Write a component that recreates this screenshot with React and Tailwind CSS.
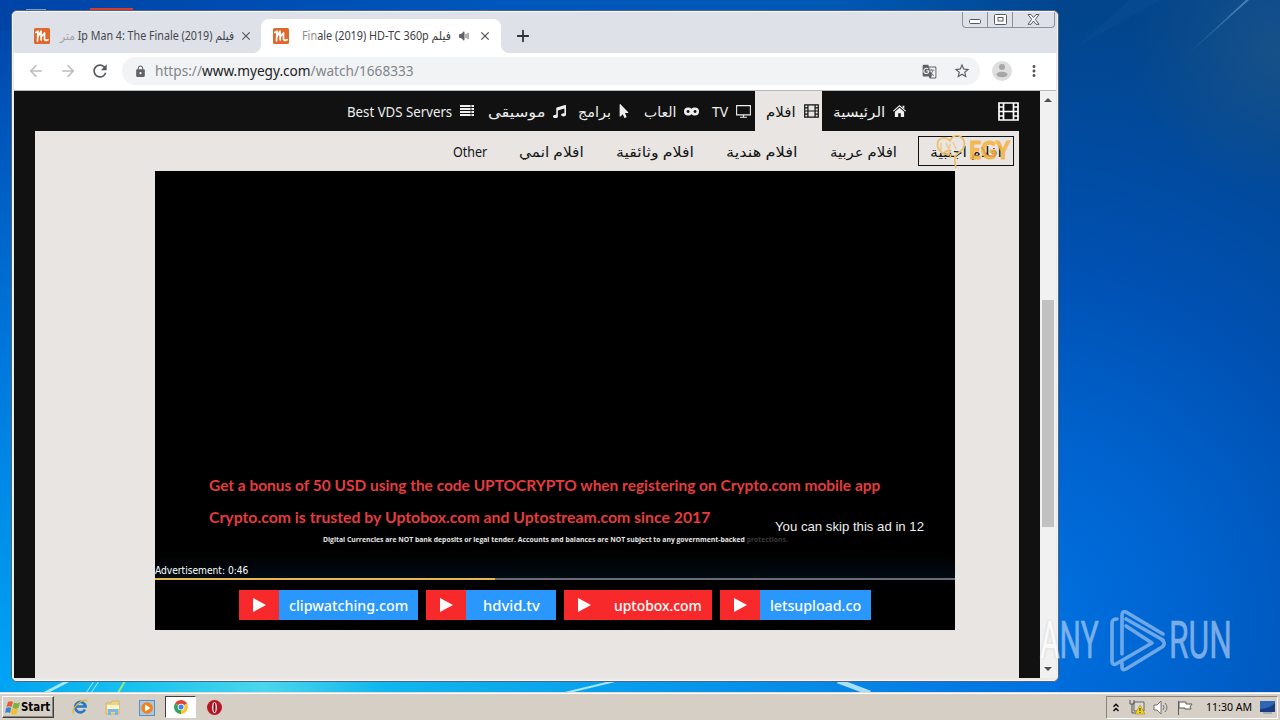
import React, { useLayoutEffect, useRef } from "react";
import { ArrowLeft, ArrowRight, Plus } from "lucide-react";
import { MdLock, MdStarBorder, MdRefresh, MdGTranslate, MdClose, MdMoreVert } from "react-icons/md";
import { FaMusic, FaMousePointer } from "react-icons/fa";

/* A text label that condenses or widens its glyphs to fill its box. */
function Fit({ className = "", dir, children }) {
  const box = useRef(null);
  const text = useRef(null);
  useLayoutEffect(() => {
    const fit = () => {
      text.current.style.transform = "none";
      const k = box.current.clientWidth / text.current.offsetWidth;
      text.current.style.transform = `scaleX(${k})`;
    };
    fit();
    if (document.fonts) document.fonts.ready.then(fit);
  }, []);
  return (
    <span dir="ltr" ref={box} className={"flex shrink-0 whitespace-nowrap " + className}>
      <span ref={text} dir={dir} className="inline-block shrink-0 origin-left">
        {children}
      </span>
    </span>
  );
}

function Favicon() {
  return (
    <svg className="h-4 w-4 shrink-0" viewBox="0 0 16 16">
      <rect width="16" height="16" rx="1.5" fill="#e0682a" />
      <path d="M1.800 4.500 4 3.200 3.500 13M4.200 8 7 3.200 7.200 12M7.500 8.500 10.500 5v6.500l1.500 1 2-.8" fill="none" stroke="#fff" strokeWidth="1.700" strokeLinecap="round" strokeLinejoin="round" />
    </svg>
  );
}

function Film({ className }) {
  return (
    <svg className={className} viewBox="0 0 21 19" fill="none" stroke="currentColor" strokeWidth="1.700">
      <path d="M1 1h19v17H1zM5.500 1v17M15.500 1v17M5.500 9.500h10M1 5h4.500M1 9.500h4.500M1 14h4.500M15.500 5H20M15.500 9.500H20M15.500 14H20" />
    </svg>
  );
}

function Servers({ className }) {
  return (
    <svg className={className} viewBox="0 0 14 12" fill="currentColor">
      <path d="M0 0h14v2H0zM0 3h14v2H0zM0 6h14v2H0zM0 9h14v2H0z" />
      <path d="M10 1h2M10 4h2M10 7h2M10 10h2" stroke="#111" strokeWidth=".8" />
    </svg>
  );
}

function Gamepad({ className }) {
  return (
    <svg className={className} viewBox="0 0 15 9" fill="currentColor">
      <path fillRule="evenodd" d="M4 .5c1.700 0 2.500.6 3.500 1.200C8.500 1.100 9.300.5 11 .5a4 4 0 0 1 0 8c-1.700 0-2.500-.6-3.500-1.300C6.500 7.900 5.700 8.500 4 8.500a4 4 0 0 1 0-8ZM4 3a1.500 1.500 0 1 0 .1 0ZM11 3a1.500 1.500 0 1 0 .1 0Z" />
    </svg>
  );
}

function Monitor({ className }) {
  return (
    <svg className={className} viewBox="0 0 15 13" fill="none" stroke="currentColor" strokeWidth="1.100">
      <path d="M.6.600h13.800v9.300H.6zM7.500 10v2M4 12.200h7" />
    </svg>
  );
}

function House({ className }) {
  return (
    <svg className={className} viewBox="0 0 13 12" fill="currentColor">
      <path d="M6.500 0 13 5.700l-.8.9-5.700-5-5.700 5-.8-.9ZM9.500.8h1.800v3L9.500 2.300ZM6.500 2.700l4.600 4V12H7.800V8.300H5.200V12H1.900V6.700Z" />
    </svg>
  );
}

const hosts = [
  { name: "clipwatching.com", box: "w-[179px]", label: "w-[119px] ml-[10px]", bg: "bg-[#2997fb]" },
  { name: "hdvid.tv", box: "w-[130px]", label: "w-[57px] ml-[17px]", bg: "bg-[#2997fb]" },
  { name: "uptobox.com", box: "w-[148px]", label: "w-[88px] ml-[10px]", bg: "bg-[#f8292a]" },
  { name: "letsupload.co", box: "w-[151px]", label: "w-[91px] ml-[10px]", bg: "bg-[#2997fb]" },
];

function TabStrip() {
  return (
    <div className="flex h-[41px] w-full items-start bg-[#dee1e7] font-[Noto_Sans,DejaVu_Sans,sans-serif] text-[12px]">
      <div className="mt-[7px] flex h-[34px] w-[248px] items-center pl-[21px] text-[#45484e]">
        <Favicon />
        <Fit dir="rtl" className="ml-[10px] w-[174px]">
          فيلم <bdi dir="ltr">Ip Man 4: The Finale (2019)</bdi> <span className="opacity-40">متر</span>
        </Fit>
        <MdClose className="ml-[5px] h-[14px] w-[14px] shrink-0 text-[#54575c]" />
      </div>
      <div className="relative mt-[7px] flex h-[34px] w-[240px] items-center rounded-t-lg bg-white pl-3 text-[#3c4043]">
        <svg className="absolute bottom-0 -left-2 h-2 w-2" viewBox="0 0 8 8"><path d="M8 0v8H0a8 8 0 0 0 8-8Z" fill="#fff" /></svg>
        <svg className="absolute -right-2 bottom-0 h-2 w-2" viewBox="0 0 8 8"><path d="M0 0v8h8a8 8 0 0 1-8-8Z" fill="#fff" /></svg>
        <Favicon />
        <Fit dir="rtl" className="ml-[13px] w-[149px]">
          فيلم <bdi dir="ltr"><span className="opacity-60">Fin</span>ale (2019) HD-TC 360p</bdi>
        </Fit>
        <svg className="ml-2 h-[10px] w-[11px] shrink-0" viewBox="0 0 11 10" fill="none" stroke="#5f6368">
          <path d="M.5 3.500H2L5 .8v8.400L2 6.500H.5Z" fill="#5f6368" />
          <path d="M7 2.800v4.400M9 1.800v6.400" />
        </svg>
        <MdClose className="ml-[8px] h-[14px] w-[14px] shrink-0 text-[#4b4e53]" />
      </div>
      <Plus className="mt-[15px] ml-[13px] h-[18px] w-[18px] text-[#303338]" strokeWidth={2.4} />
      <div className="mr-[2px] ml-auto flex h-[16px] w-[93px] rounded-b border border-t-0 border-[#8c9099] text-[#565a66]">
        <div className="flex w-[25px] items-center justify-center border-r border-[#8c9099]">
          <svg className="mt-1 h-[5px] w-3" viewBox="0 0 12 5"><rect x=".5" y=".5" width="11" height="4" rx="1" fill="#fff" stroke="currentColor" /></svg>
        </div>
        <div className="flex w-[25px] items-center justify-center border-r border-[#8c9099]">
          <svg className="h-[11px] w-[13px]" viewBox="0 0 13 11"><rect x=".5" y=".5" width="12" height="10" rx="1" fill="#fff" stroke="currentColor" /><rect x="4" y="3.500" width="5" height="3.500" fill="none" stroke="currentColor" /></svg>
        </div>
        <div className="flex grow items-center justify-center">
          <svg className="h-[11px] w-[13px]" viewBox="0 0 13 11"><path d="M1 .5h3l2.500 3L9 .5h3L8.300 5.300l3.700 5H9L6.500 7 4 10.300H1l3.700-5Z" fill="#fff" stroke="currentColor" /></svg>
        </div>
      </div>
    </div>
  );
}

function Toolbar() {
  return (
    <div className="flex h-[38px] w-full items-center border-b border-[#b4b7bb] bg-white pb-px pl-[13px]">
      <ArrowLeft className="h-[18px] w-[18px] text-[#babcbe]" strokeWidth={2.2} />
      <ArrowRight className="ml-[14px] h-[18px] w-[18px] text-[#babcbe]" strokeWidth={2.2} />
      <MdRefresh className="ml-[13px] h-[20px] w-[20px] text-[#55585d]" />
      <div className="ml-[12px] flex h-7 w-[858px] items-center rounded-full bg-[#f1f3f4] pl-3">
        <MdLock className="h-[13px] w-[13px] text-[#5f6368]" />
        <Fit className="ml-[8px] w-[259px] font-[Noto_Sans,sans-serif] text-[14px] leading-7 text-[#80868b]">
          https://<span className="text-[#202124]">www.myegy.com</span>/watch/1668333
        </Fit>
        <MdGTranslate className="ml-[508px] h-[15px] w-[15px] text-[#5f6368]" />
        <MdStarBorder className="ml-[16px] h-[18px] w-[18px] text-[#5f6368]" />
      </div>
      <svg className="ml-[12px] h-5 w-5" viewBox="0 0 20 20">
        <circle cx="10" cy="10" r="10" fill="#dedede" />
        <circle cx="10" cy="6" r="3" fill="#a6a6a6" />
        <ellipse cx="10" cy="13.500" rx="5.500" ry="2.800" fill="#a6a6a6" />
      </svg>
      <MdMoreVert className="ml-[13px] h-[18px] w-[18px] text-[#55585d]" />
    </div>
  );
}

function MainNav() {
  return (
    <nav className="flex h-10 items-center bg-[#111] pl-[333px] text-[14px] text-[#eee]">
      <Fit className="w-[105px]">Best VDS Servers</Fit>
      <Servers className="ml-2 h-3 w-[14px]" />
      <Fit className="ml-[14px] w-[57px]" dir="rtl">موسيقى</Fit>
      <FaMusic className="ml-2 h-[13px] w-[13px]" />
      <Fit className="ml-[12px] w-[33px]" dir="rtl">برامج</Fit>
      <FaMousePointer className="ml-[7px] h-[14px] w-[12px]" />
      <Fit className="ml-[14px] w-[32px]" dir="rtl">العاب</Fit>
      <Gamepad className="ml-2 h-[9px] w-[15px]" />
      <Fit className="ml-[13px] w-4">TV</Fit>
      <Monitor className="ml-2 h-[13px] w-[15px]" />
      <div className="ml-1 flex h-10 w-[67px] shrink-0 items-center bg-[#e8e5e3] pl-[11px] text-[#111]">
        <Fit className="w-[30px]" dir="rtl">افلام</Fit>
        <Film className="ml-2 h-[14px] w-[15px] shrink-0" />
      </div>
      <Fit className="ml-[11px] w-[52px]" dir="rtl">الرئيسية</Fit>
      <House className="ml-2 h-3 w-[13px]" />
      <Film className="ml-[92px] h-[19px] w-[21px] text-white" />
    </nav>
  );
}

function SubNav() {
  return (
    <nav className="flex h-10 items-center pl-[418px] text-[14px] text-[#151515]">
      <Fit className="w-[34px]">Other</Fit>
      <Fit className="ml-8 w-[65px]" dir="rtl">افلام انمي</Fit>
      <Fit className="ml-8 w-[78px]" dir="rtl">افلام وثائقية</Fit>
      <Fit className="ml-8 w-[72px]" dir="rtl">افلام هندية</Fit>
      <Fit className="ml-8 w-[67px]" dir="rtl">افلام عربية</Fit>
      <div className="relative ml-[21px] flex h-[30px] w-[96px] items-center border border-[#111] pl-[11px]">
        <Fit className="w-[72px]" dir="rtl">افلام اجنبية</Fit>
        <div className="absolute top-[-2px] left-[17px] flex items-start">
          <svg className="h-[34px] w-[31px] shrink-0" viewBox="0 0 31 34" fill="none" stroke="#f0bd68" strokeWidth="1.700">
            <path d="M8 19C-1 14 0 4 7 3c4-1 6 2 7 3 2-5 7-7 11-4 5 4 4 11 0 14l-6 5v6l1 6M8 19c1-3 4-4 7-3M8 19c3 1 5 0 6-2M15 19l-1 4" />
            <path d="M5 8v7M10 8l3 6M17 7l3 7M14 9l-1 6" opacity=".6" />
          </svg>
          <Fit className="ml-[2px] w-[41px] font-[Lato,sans-serif] text-[25px] leading-[28px] font-black text-[#f7b33fdd] [-webkit-text-stroke:1px_#f7b33fdd]">EGY</Fit>
        </div>
      </div>
    </nav>
  );
}

function Player() {
  return (
    <section className="ml-[120px] flex h-[459px] w-[800px] flex-col bg-black">
      <div className="relative flex h-[407px] flex-col bg-[linear-gradient(180deg,#000_94%,#020a12)] pt-[298px] pl-[54px] font-[Lato,sans-serif] text-[16px] font-bold text-[#e43c3f]">
        <Fit className="h-8 w-[671px] leading-8">Get a bonus of 50 USD using the code UPTOCRYPTO when registering on Crypto.com mobile app</Fit>
        <Fit className="h-[34px] w-[501px] leading-8">Crypto.com is trusted by Uptobox.com and Uptostream.com since 2017</Fit>
        <Fit className="ml-[114px] h-[10px] w-[465px] font-[Open_Sans,sans-serif] text-[7px] leading-[10px] font-bold text-[#e6e6e6]">
          Digital Currencies are NOT bank deposits or legal tender. Accounts and balances are NOT subject to any government-backed <span className="text-[#3a3a3a]">protections.</span>
        </Fit>
        <Fit className="absolute top-[346px] left-[620px] w-[149px] font-[Liberation_Sans,sans-serif] text-[13px] leading-5 font-normal text-[#eee]">You can skip this ad in 12</Fit>
        <Fit className="absolute top-[393px] left-0 w-[93px] font-[DejaVu_Sans,sans-serif] text-[10px] leading-[14px] font-normal text-white">Advertisement: 0:46</Fit>
      </div>
      <div className="flex h-[2px] bg-[#6c6c78]">
        <div className="w-[340px] bg-[#e9b851]" />
      </div>
      <div className="flex h-[50px] items-center justify-center gap-2 text-[15px] font-medium text-white">
        {hosts.map((h) => (
          <div key={h.name} className={`flex h-[30px] items-center ${h.box} ${h.bg}`}>
            <span className="flex h-[30px] w-10 shrink-0 items-center justify-center bg-[#f8292a]">
              <svg className="h-[14px] w-[13px]" viewBox="0 0 13 14"><path d="M0 0l13 7-13 7Z" fill="#fff" /></svg>
            </span>
            <Fit className={h.label}>{h.name}</Fit>
          </div>
        ))}
      </div>
    </section>
  );
}

function Browser() {
  return (
    <div className="absolute top-[10px] left-[11px] flex h-[672px] w-[1048px] flex-col rounded-md border border-[#526579] bg-[#eceae9]">
      <div className="flex h-full w-full flex-col overflow-hidden rounded-[5px] border border-[#f4f5f7]">
        <TabStrip />
        <div className="flex flex-col pr-px pl-px">
          <Toolbar />
          <div className="flex h-[587px] overflow-hidden">
            <main className="w-[1026px] shrink-0 bg-[#111] font-[Noto_Sans,DejaVu_Sans,sans-serif]">
              <MainNav />
              <div className="ml-[21px] h-[547px] w-[984px] bg-[#e8e5e3]">
                <SubNav />
                <Player />
              </div>
            </main>
            <div className="flex grow flex-col items-center bg-[#f1f1f1]">
              <svg className="mt-[7px] h-1 w-2" viewBox="0 0 8 4"><path d="M0 4l4-4 4 4Z" fill="#505050" /></svg>
              <div className="mt-[198px] h-[227px] w-[12px] bg-[#c1c1c1]" />
              <svg className="mt-[140px] h-1 w-2" viewBox="0 0 8 4"><path d="M0 0l4 4 4-4Z" fill="#505050" /></svg>
            </div>
          </div>
        </div>
      </div>
    </div>
  );
}

function Wallpaper() {
  return (
    <svg className="absolute inset-0 h-[720px] w-[1280px]" viewBox="0 0 1280 720" preserveAspectRatio="none">
      <defs>
        <linearGradient id="side" x1="0" y1="0" x2="0" y2="1">
          <stop offset="0" stopColor="#0043a7" /><stop offset=".5" stopColor="#0078dd" /><stop offset="1" stopColor="#00a9f7" />
        </linearGradient>
        <linearGradient id="top" x1="0" x2="1">
          <stop offset="0" stopColor="#0043a7" /><stop offset=".4" stopColor="#0057bb" /><stop offset=".65" stopColor="#0058b5" /><stop offset=".82" stopColor="#024690" /><stop offset="1" stopColor="#07478d" />
        </linearGradient>
        <radialGradient id="right" gradientUnits="userSpaceOnUse" cx="1010" cy="620" r="610">
          <stop offset="0" stopColor="#0073e3" /><stop offset=".28" stopColor="#0064d0" /><stop offset=".6" stopColor="#0050b1" /><stop offset="1" stopColor="#02458c" />
        </radialGradient>
        <radialGradient id="haze" gradientUnits="userSpaceOnUse" cx="1280" cy="50" r="150">
          <stop offset="0" stopColor="#1c5488" stopOpacity=".8" /><stop offset="1" stopColor="#1c5488" stopOpacity="0" />
        </radialGradient>
        <linearGradient id="floor" x1="0" x2="1">
          <stop offset="0" stopColor="#00a3f0" /><stop offset=".12" stopColor="#16c1ef" /><stop offset=".25" stopColor="#4bd6ec" /><stop offset=".36" stopColor="#12b7ee" /><stop offset=".6" stopColor="#079ceb" /><stop offset=".82" stopColor="#0684e6" /><stop offset="1" stopColor="#006fdf" />
        </linearGradient>
        <linearGradient id="ray" x1="0" y1="1" x2="1" y2="0">
          <stop offset="0" stopColor="#7db2e0" stopOpacity="0" /><stop offset="1" stopColor="#7db2e0" stopOpacity=".55" />
        </linearGradient>
      </defs>
      <rect width="40" height="720" fill="url(#side)" />
      <rect width="1280" height="30" fill="url(#top)" />
      <rect x="1056" width="224" height="720" fill="url(#right)" />
      <rect x="1059" width="221" height="220" fill="url(#haze)" />
      <path d="M1178 63 1246 0h3Z" fill="url(#ray)" />
      <path d="M1075 48 1130 0h30Z" fill="#3c7cc0" opacity=".08" />
      <rect y="680" width="1059" height="14" fill="url(#floor)" />
      <g stroke="#d4f6ff" opacity=".8">
        <path d="M45 693 68 681" strokeWidth="3" /><path d="M86 693 94 681M91 693l8-12" strokeWidth="1" /><path d="M118 693l7-12" stroke="#c9ee63" strokeWidth="2" /><path d="M565 693l50-12" strokeWidth="2" /><path d="M838 681l32 12" strokeWidth="5" />
      </g>
      <rect x="90" y="8" width="43" height="3" fill="#d83a2c" />
      <rect x="26" y="9" width="20" height="2" fill="#7b9ecb" />
    </svg>
  );
}

function Watermark() {
  return (
    <div className="absolute top-[610px] left-[1040px] flex h-[62px] items-center font-[Roboto,sans-serif] text-[52px] leading-[62px] text-[#b9d5f5] opacity-65">
      <Fit className="w-[59px] [-webkit-text-stroke:0.6px_currentColor]"><span className="text-white [text-shadow:0_0_3px_#77777799]">A</span>NY</Fit>
      <svg className="ml-[11px] h-[62px] w-[56px] shrink-0" viewBox="0 0 56 62" fill="none" stroke="#a9cbf2" strokeWidth="3.600" strokeLinejoin="round" strokeLinecap="round">
        <path d="M7 9c-3 0-5 1-5 4v38c0 3 2 4 4 3l36-21L16 16" />
        <path d="M12 44V5c0-3 2-4 4-3l37 22M53 30 16 9M12 53v4c0 3 2 3 4 2l36-22c3-2 3-5 0-7" />
      </svg>
      <Fit className="ml-[3px] w-[63px] [-webkit-text-stroke:0.6px_currentColor]">RUN</Fit>
    </div>
  );
}

function Taskbar() {
  return (
    <footer className="absolute bottom-0 left-0 flex h-7 w-full items-center border-t border-[#e0dcd5] bg-[#d6cfc6] pl-[2px] font-[DejaVu_Sans,sans-serif] text-[11px] text-black shadow-[inset_0_1px_0_#fff]">
      <div className="mt-[1px] flex h-[22px] w-[52px] items-center border border-t-white border-r-[#404040] border-b-[#404040] border-l-white pl-[2px] shadow-[inset_-1px_-1px_0_#8a857c]">
        <svg className="h-[15px] w-[16px] shrink-0" viewBox="0 0 16 15">
          <path d="M3 2c2-1.300 3.500-1 5 0L6.500 7C5 6 3.500 6 1.500 7Z" fill="#e8592b" />
          <path d="M9 2.500c2 1 3.500 1 6 0L13.500 8C12 9 9.500 9 7.500 7.500Z" fill="#79b441" />
          <path d="M1.200 8c2-1 3.500-1 5 0L5 13c-2-1.200-3.300-1-5 0Z" fill="#2f86d8" />
          <path d="M7 8.500c2 1 3.500 1 6 .5l-1.500 5c-2 1-4 .7-6-.7Z" fill="#f6bf27" />
        </svg>
        <Fit className="w-[29px] text-[12px] font-bold">Start</Fit>
      </div>
      <svg className="mt-px ml-[18px] h-4 w-4" viewBox="0 0 16 16" fill="none">
        <path d="M13 10.500a5.200 5.200 0 1 1 .5-3H4" stroke="#2678c8" strokeWidth="2.700" />
        <path d="M2 14.500C-1 13 3 6 9 2.500c4-2.400 6-2 6 .2" stroke="#e7b52e" strokeWidth="1.300" />
      </svg>
      <svg className="mt-[2px] ml-[17px] h-4 w-4" viewBox="0 0 16 16">
        <path d="M1 3h5l1-2h7v13H1Z" fill="#f0d382" stroke="#c9a549" strokeWidth=".6" /><path d="M2 5h12v4H2Z" fill="#fff3c6" /><path d="M3 15V9h10v6h-3v-3H6v3Z" fill="#75b9e4" />
      </svg>
      <svg className="mt-[2px] ml-[18px] h-4 w-4" viewBox="0 0 16 16">
        <rect x=".5" y=".5" width="15" height="15" fill="#aac7e6" stroke="#5c8fc2" /><circle cx="8" cy="8" r="5.800" fill="#f08218" /><path d="M6 4.500 11.500 8 6 11.500Z" fill="#fff" />
      </svg>
      <div className="mt-[1px] ml-[10px] flex h-[22px] w-[31px] items-center justify-center border border-t-[#404040] border-r-white border-b-white border-l-[#404040] bg-white">
        <svg className="h-[14px] w-[14px]" viewBox="0 0 16 16">
          <path d="M8 8 1.100 4A8 8 0 0 1 14.900 4Z" fill="#df4534" /><path d="M8 8 14.900 4A8 8 0 0 1 8 16Z" fill="#f6ca36" /><path d="M8 8v8A8 8 0 0 1 1.100 4Z" fill="#35a357" />
          <circle cx="8" cy="8" r="3.800" fill="#fff" /><circle cx="8" cy="8" r="2.900" fill="#4283e8" />
        </svg>
      </div>
      <svg className="mt-[2px] ml-[11px] h-[15px] w-[15px]" viewBox="0 0 16 16">
        <circle cx="8" cy="8" r="8" fill="#b41724" /><ellipse cx="8" cy="8" rx="2.600" ry="6" fill="#f4e8e8" /><ellipse cx="8" cy="8" rx="1.100" ry="5" fill="#7e0c16" />
      </svg>
      <div className="mt-[1px] mr-[2px] ml-auto flex h-[23px] w-[172px] items-center border border-t-[#8a857c] border-r-white border-b-white border-l-[#8a857c] pl-[6px]">
        <svg className="h-[9px] w-[6px]" viewBox="0 0 6 9" fill="none" stroke="#000" strokeWidth="1.400"><path d="M.5 3.800 3 1.300l2.500 2.500M.5 8 3 5.500 5.500 8" /></svg>
        <svg className="ml-[10px] h-4 w-4" viewBox="0 0 16 16">
          <path d="M5 3h10v9H5Z" fill="#d9d9d9" stroke="#666" /><path d="M1 1v4h4V1M3 5v9h4" fill="none" stroke="#555" /><path d="M11 6l5 9H6Z" fill="#f5d415" stroke="#a58b00" strokeWidth=".6" /><path d="M11 9v3M11 13v1" stroke="#222" />
        </svg>
        <svg className="ml-2 h-[15px] w-4" viewBox="0 0 16 15" fill="none" stroke="#77736c">
          <path d="M1 5h3l4-4v13l-4-4H1Z" fill="#fff" /><path d="M10 5q2 2.500 0 5M12 3q4 4.500 0 9" />
        </svg>
        <svg className="ml-2 h-[15px] w-4" viewBox="0 0 16 15" fill="#fff" stroke="#5f5b55">
          <path d="M1.500 1v14M2 2h7v2h6l-2 3 1 2H8V8H2Z" />
        </svg>
        <Fit className="ml-[13px] w-[46px] font-[Noto_Sans,sans-serif]">11:30 AM</Fit>
        <svg className="ml-2 h-[13px] w-[15px]" viewBox="0 0 15 13"><path d="M0 0h15v11H0Z" fill="#2e66b4" /><path d="M0 8Q8 8 15 2v9H0Z" fill="#173e80" /><path d="M3 12h9" stroke="#7a8aa0" /></svg>
      </div>
    </footer>
  );
}

export default function App() {
  return (
    <div className="relative h-[720px] w-[1280px] overflow-hidden bg-[#0058bd]">
      <Wallpaper />
      <Browser />
      <Watermark />
      <Taskbar />
    </div>
  );
}
